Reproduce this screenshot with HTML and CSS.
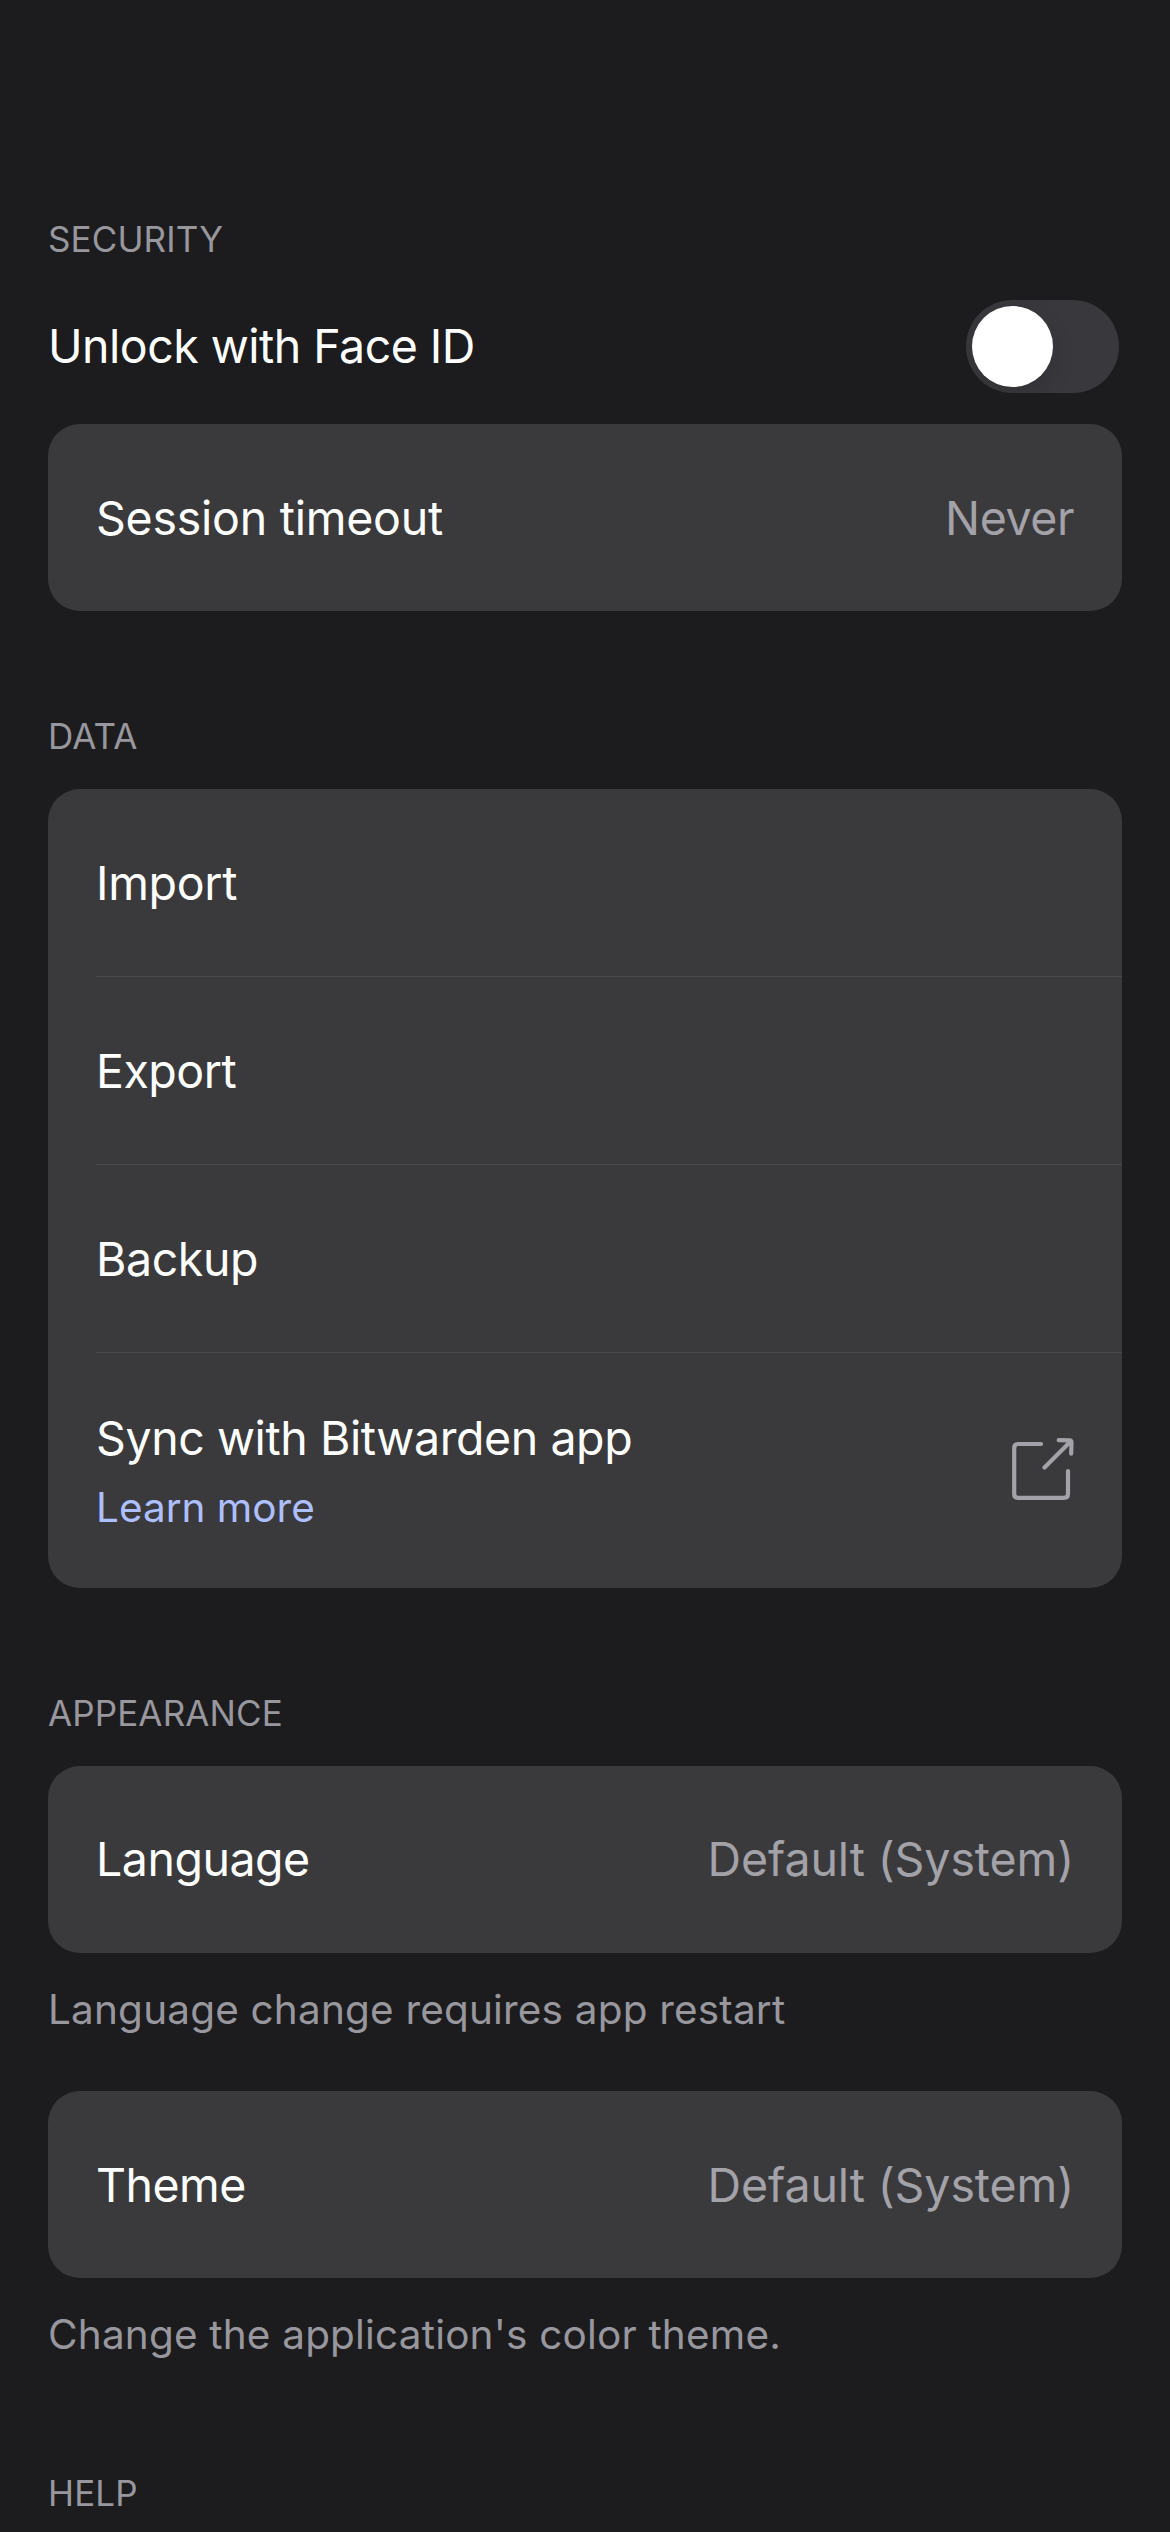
FILE: index.html
```html
<!DOCTYPE html>
<html lang="en">
<head>
<meta charset="utf-8">
<title>Settings</title>
<link rel="stylesheet" href="styles.css">
</head>
<body>
<main class="settings">
  <section class="section security">
    <h2 class="heading">SECURITY</h2>
    <div class="toggle-row"><span class="label t-unlock">Unlock with Face ID</span><span class="switch" role="switch" aria-checked="false"><span class="knob"></span></span></div>
    <div class="card"><div class="row"><span class="label t-session">Session timeout</span><span class="value">Never</span></div></div>
  </section>
  <section class="section data">
    <h2 class="heading">DATA</h2>
    <div class="card">
      <div class="row divided"><span class="label t-import">Import</span></div>
      <div class="row divided"><span class="label t-export">Export</span></div>
      <div class="row divided"><span class="label">Backup</span></div>
      <div class="row sync">
        <div class="stack"><span class="label">Sync with Bitwarden app</span><a class="link">Learn more</a></div>
        <svg class="external" viewBox="0 0 62 62"><path d="M29 6H6Q2.2 6 2.2 10V56Q2.2 59.8 6 59.8H52Q56 59.8 56 56V33M32.5 29.5L59 3M46.7 2.2L57.5 2.4Q59.6 2.5 59.5 4.5L59.2 15.6"/></svg>
      </div>
    </div>
  </section>
  <section class="section appearance">
    <h2 class="heading">APPEARANCE</h2>
    <div class="card"><div class="row r-language"><span class="label t-language">Language</span><span class="value v-default">Default (System)</span></div></div>
    <p class="note">Language change requires app restart</p>
    <div class="card"><div class="row"><span class="label t-theme">Theme</span><span class="value v-default">Default (System)</span></div></div>
    <p class="note">Change the application's color theme.</p>
  </section>
  <section class="section help"><h2 class="heading">HELP</h2></section>
</main>
</body>
</html>
```
FILE: styles.css
```css
* { box-sizing: border-box; }
body { margin: 0; background: #1c1c1e; color: #fff; font-family: Inter, "Liberation Sans", sans-serif; }
.settings { height: 2532px; overflow: hidden; padding: 214px 48px 0; }
.heading { margin: 0; height: 50px; line-height: 50px; font-size: 35px; font-weight: 400; letter-spacing: 0.12px; color: #98979e; }
.toggle-row { display: flex; align-items: center; justify-content: space-between; height: 160px; padding: 5px 3px 0 0; }
.label, .value { font-size: 46.5px; line-height: 60px; letter-spacing: -0.42px; white-space: nowrap; }
.value { color: #a3a2a9; }
.v-default { letter-spacing: -0.1px; }
.t-unlock { margin-top: -2px; letter-spacing: -0.52px; }
.t-session { letter-spacing: -0.25px; }
.t-import { letter-spacing: -0.3px; }
.t-export { letter-spacing: -0.5px; }
.t-language { letter-spacing: -0.5px; }
.t-theme { letter-spacing: -0.5px; }
.switch { display: flex; width: 153px; height: 93px; padding: 6px; border-radius: 47px; background: #39393d; overflow: hidden; }
.knob { width: 81px; height: 81px; border-radius: 50%; background: #fff; box-shadow: 0 9px 24px rgba(0, 0, 0, 0.12); }
.card { border-radius: 32px; background: #3a3a3c; overflow: hidden; }
.row { display: flex; align-items: center; justify-content: space-between; height: 187px; margin-left: 48px; padding-right: 48px; }
.r-language { padding-bottom: 1px; }
.divided { height: 188px; border-bottom: 1px solid #4a4a4c; }
.data, .appearance { padding-top: 100px; }
.heading + .card { margin-top: 28px; }
.sync { height: 235px; }
.stack { display: flex; flex-direction: column; gap: 12px; padding-top: 2px; }
.link { font-size: 40.5px; line-height: 56px; letter-spacing: 0; color: #aebfff; }
.external { width: 62px; height: 62px; margin-top: -3px; fill: none; stroke: #a3a2a9; stroke-width: 4.2; stroke-linecap: round; stroke-linejoin: round; overflow: visible; }
.note { margin: 0; height: 138px; padding-top: 29px; font-size: 40.5px; line-height: 56px; letter-spacing: 0.18px; color: #98979e; white-space: nowrap; }
.help { padding-top: 52px; }
```
